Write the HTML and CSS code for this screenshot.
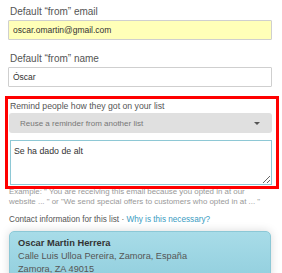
FILE: index.html
```html
<!DOCTYPE html>
<html lang="en">
<head>
    <meta charset="UTF-8">
    <meta name="viewport" content="width=device-width, initial-scale=1.0">
    <title>List settings</title>

    <link rel="stylesheet" href="styles.css">
</head>
<body>
    <div class="page">
        <div class="field">
            <label for="from_email">Default “from” email</label>
            <input type="text" id="from_email" class="input input-filled" value="oscar.omartin@gmail.com">
        </div>
        <div class="field">
            <label for="from_name">Default “from” name</label>
            <input type="text" id="from_name" class="input" value="Óscar">
        </div>

        <div class="reminder">
            <label for="reminder" class="reminder-label">Remind people how they got on your list</label>
            <div class="select">
                <span>Reuse a reminder from another list</span>
                <span class="caret"></span>
            </div>
            <textarea id="reminder" class="textarea">Se ha dado de alt</textarea>
            <p class="hint">Example: " You are receiving this email because you opted in at our<br>website ... " or "We send special offers to customers who opted in at ... "</p>
        </div>

        <div class="contact-label">Contact information for this list · <a href="#">Why is this necessary?</a></div>
        <div class="contact-card">
            <div class="contact-name">Oscar Martin Herrera</div>
            <div>Calle Luis Ulloa Pereira, Zamora, España</div>
            <div>Zamora, ZA 49015</div>
        </div>
    </div>
</body>
</html>
```

FILE: styles.css
```css
body {
    margin: 0;
    background: #fff;
    font-family: "Liberation Sans", Arial, sans-serif;
    color: #555;
}

.page {
    padding: 6px 10px 0 8px;
}

.field {
    margin-bottom: 13px;
}

.field label {
    display: block;
    margin: 0 0 2px 2px;
    font-size: 10px;
    line-height: 12px;
    color: #555;
}

.input {
    display: block;
    box-sizing: border-box;
    width: 100%;
    height: 20px;
    margin: 0;
    padding: 0 4px;
    border: 1px solid #cfcfcf;
    border-radius: 1px;
    background: #fff;
    font-family: inherit;
    font-size: 8.5px;
    color: #333;
}

.input-filled {
    background: #ffffb8;
}

.field + .field {
    margin-bottom: 10px;
}

/* the red frame is an annotation drawn over the form */
.reminder {
    position: relative;
    padding-top: 3px;
}

.reminder::after {
    content: "";
    position: absolute;
    top: -1px;
    left: -3px;
    right: -7px;
    height: 87px;
    border: 3px solid #ff0000;
    pointer-events: none;
}

.reminder-label {
    display: block;
    margin: 0 0 1px 2px;
    font-size: 8.7px;
    line-height: 12px;
    color: #555;
}

.select {
    display: flex;
    align-items: center;
    justify-content: space-between;
    height: 20px;
    margin-left: 1px;
    padding: 0 12px 0 11px;
    background: #e0e0e0;
    border-radius: 3px;
    font-size: 8px;
    color: #777;
}

.caret {
    width: 0;
    height: 0;
    border-left: 3px solid transparent;
    border-right: 3px solid transparent;
    border-top: 3px solid #555;
}

.textarea {
    display: block;
    box-sizing: border-box;
    width: calc(100% - 2px);
    height: 45px;
    margin: 7px 0 0 2px;
    padding: 5px 3px;
    border: 1px solid #8ec8d5;
    font-family: inherit;
    font-size: 8.8px;
    line-height: 10px;
    color: #333;
}

.hint {
    margin: 2px 0 0 1px;
    font-size: 7.9px;
    line-height: 10px;
    color: #999;
    white-space: nowrap;
}

.contact-label {
    margin: 7px 0 5px 1px;
    font-size: 8.2px;
    line-height: 12px;
    color: #555;
}

.contact-label a {
    color: #3a9bbf;
    text-decoration: none;
}

.contact-card {
    margin: 0 1px;
    padding: 5px 8px 4px;
    border: 1px solid #8cc8d6;
    border-radius: 5px;
    background: linear-gradient(#a8dce8, #92cfde);
    box-shadow: 0 0 10px rgba(0, 0, 0, 0.15);
    font-size: 9.2px;
    line-height: 13px;
    color: #555;
}

.contact-name {
    font-weight: bold;
    font-size: 9.3px;
    color: #333;
}
```
